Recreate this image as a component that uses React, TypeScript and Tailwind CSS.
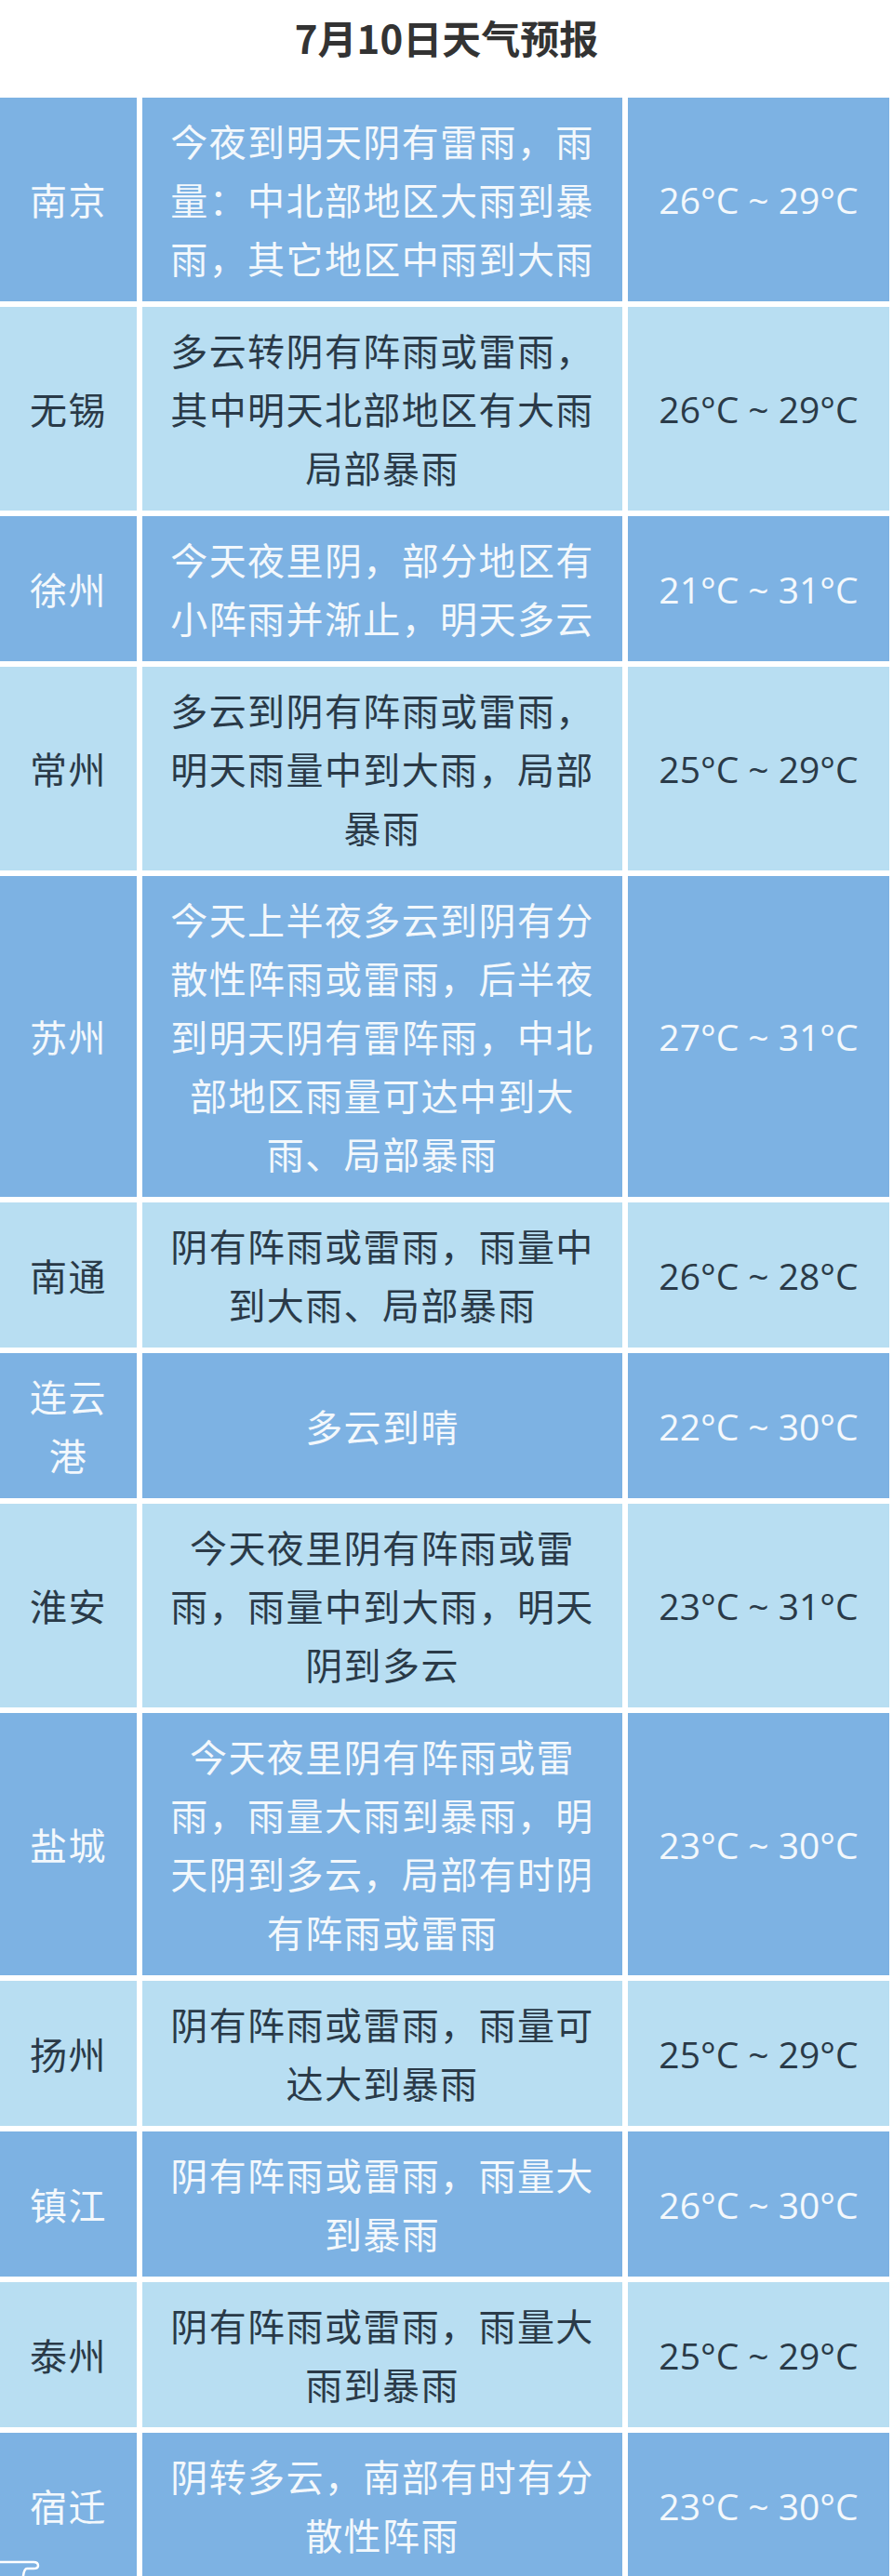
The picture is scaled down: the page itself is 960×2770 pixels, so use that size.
import React from "react";

type Row = {
  city: string[];
  desc: string[];
  temp: string;
};

const ROWS: Row[] = [
  {
    city: ["南京"],
    desc: ["今夜到明天阴有雷雨，雨", "量：中北部地区大雨到暴", "雨，其它地区中雨到大雨"],
    temp: "26°C ~ 29°C",
  },
  {
    city: ["无锡"],
    desc: ["多云转阴有阵雨或雷雨，", "其中明天北部地区有大雨", "局部暴雨"],
    temp: "26°C ~ 29°C",
  },
  {
    city: ["徐州"],
    desc: ["今天夜里阴，部分地区有", "小阵雨并渐止，明天多云"],
    temp: "21°C ~ 31°C",
  },
  {
    city: ["常州"],
    desc: ["多云到阴有阵雨或雷雨，", "明天雨量中到大雨，局部", "暴雨"],
    temp: "25°C ~ 29°C",
  },
  {
    city: ["苏州"],
    desc: [
      "今天上半夜多云到阴有分",
      "散性阵雨或雷雨，后半夜",
      "到明天阴有雷阵雨，中北",
      "部地区雨量可达中到大",
      "雨、局部暴雨",
    ],
    temp: "27°C ~ 31°C",
  },
  {
    city: ["南通"],
    desc: ["阴有阵雨或雷雨，雨量中", "到大雨、局部暴雨"],
    temp: "26°C ~ 28°C",
  },
  {
    city: ["连云", "港"],
    desc: ["多云到晴"],
    temp: "22°C ~ 30°C",
  },
  {
    city: ["淮安"],
    desc: ["今天夜里阴有阵雨或雷", "雨，雨量中到大雨，明天", "阴到多云"],
    temp: "23°C ~ 31°C",
  },
  {
    city: ["盐城"],
    desc: ["今天夜里阴有阵雨或雷", "雨，雨量大雨到暴雨，明", "天阴到多云，局部有时阴", "有阵雨或雷雨"],
    temp: "23°C ~ 30°C",
  },
  {
    city: ["扬州"],
    desc: ["阴有阵雨或雷雨，雨量可", "达大到暴雨"],
    temp: "25°C ~ 29°C",
  },
  {
    city: ["镇江"],
    desc: ["阴有阵雨或雷雨，雨量大", "到暴雨"],
    temp: "26°C ~ 30°C",
  },
  {
    city: ["泰州"],
    desc: ["阴有阵雨或雷雨，雨量大", "雨到暴雨"],
    temp: "25°C ~ 29°C",
  },
  {
    city: ["宿迁"],
    desc: ["阴转多云，南部有时有分", "散性阵雨"],
    temp: "23°C ~ 30°C",
  },
];

const cjk = { fontFamily: '"Noto Sans CJK SC", "Noto Sans", sans-serif' };

function Lines({ lines }: { lines: string[] }) {
  return (
    <div className="text-center">
      {lines.map((l, i) => (
        <div key={i} className="whitespace-nowrap">
          {l}
        </div>
      ))}
    </div>
  );
}

function ForecastRow({ row, dark }: { row: Row; dark: boolean }) {
  const cell = dark
    ? "bg-[#7db2e3] text-[#f3f8fc]"
    : "bg-[#b8def2] text-[#2a3a48]";
  return (
    <div className="flex gap-[6px] pr-[4px]">
      <div className={`${cell} w-[147px] shrink-0 flex items-center justify-center py-[15px] text-[40px] leading-[63px] tracking-[1.4px]`}>
        <Lines lines={row.city} />
      </div>
      <div className={`${cell} w-[516px] shrink-0 flex items-center justify-center py-[15px] text-[40px] leading-[63px] tracking-[1.4px]`}>
        <Lines lines={row.desc} />
      </div>
      <div
        className={`${cell} flex-1 flex items-center justify-center py-[15px] text-[39px] leading-[63px]`}
        style={{ fontFamily: '"Open Sans", "Noto Sans", sans-serif' }}
      >
        {row.temp}
      </div>
    </div>
  );
}

export default function App() {
  return (
    <div className="relative w-[960px] bg-white" style={cjk}>
      {/* Title */}
      <div className="h-[105px] pt-[14px]">
        <h1 className="text-center text-[42px] leading-[52px] font-bold text-[#333333]">
          7月10日天气预报
        </h1>
      </div>

      {/* Table */}
      <div className="flex flex-col gap-[6px]">
        {ROWS.map((r, i) => (
          <ForecastRow key={r.temp + i} row={r} dark={i % 2 === 0} />
        ))}
      </div>

      {/* watermark fragment bottom-left */}
      <svg
        className="absolute left-0 top-[2750px]"
        width="50"
        height="20"
        viewBox="0 0 50 20"
        fill="none"
      >
        <path
          d="M0 5 H36 Q41 5 41 9 Q41 12 36 12 H29 Q26 12 25 20"
          stroke="#ffffff"
          strokeWidth="2.5"
          strokeLinecap="round"
        />
      </svg>
    </div>
  );
}
